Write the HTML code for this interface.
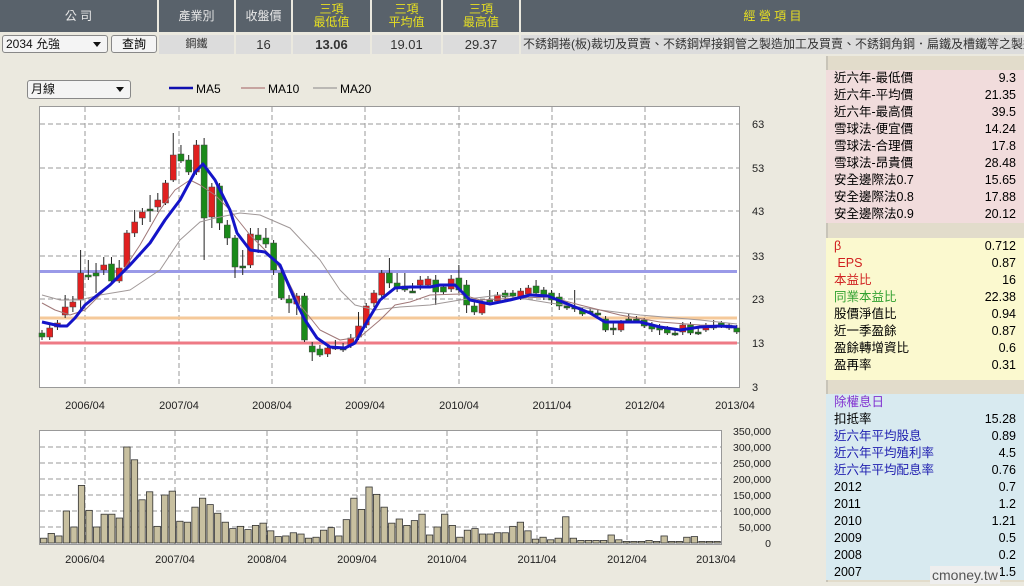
<!DOCTYPE html>
<html><head><meta charset="utf-8">
<style>
*{margin:0;padding:0;box-sizing:border-box}
body{width:1024px;height:586px;overflow:hidden;background:#ebe9df;font-family:"Liberation Sans","Noto Sans CJK TC",sans-serif;position:relative}
.h{position:absolute;top:0;height:32px;background:#59626b;color:#e8e8e8;font-size:12px;text-align:center;display:flex;align-items:center;justify-content:center;line-height:13px}
.h.y{color:#e8e020}
.r{position:absolute;top:35px;height:19px;background:#dcdcdc;font-size:13px;text-align:center;line-height:19px;color:#333}
.sel{position:absolute;background:#f4f4f4;border:1px solid #888;border-radius:3px;font-size:12px;line-height:16px;padding-left:3px;color:#111}
.sel:after{content:"";position:absolute;right:6px;top:6px;border-left:4px solid transparent;border-right:4px solid transparent;border-top:5px solid #111}
.pan{position:absolute;left:826px;width:198px;font-size:12.5px}
.pan div{height:17px;line-height:17px;display:flex;justify-content:space-between;padding:0 8px 0 8px}
</style></head><body>
<div style="position:absolute;left:0;top:0;width:90px;height:3px;background:#111"></div>
<div class="h" style="left:0;width:157px">公 司</div>
<div class="h" style="left:159px;width:75px">產業別</div>
<div class="h" style="left:236px;width:55px">收盤價</div>
<div class="h y" style="left:293px;width:77px">三項<br>最低值</div>
<div class="h y" style="left:372px;width:69px">三項<br>平均值</div>
<div class="h y" style="left:443px;width:76px">三項<br>最高值</div>
<div class="h y" style="left:521px;width:503px">經 營 項 目</div>
<div class="sel" style="left:2px;top:35px;width:106px;height:18px">2034 允強</div>
<div style="position:absolute;left:111px;top:35px;width:46px;height:18px;background:#f4f4f4;border:1px solid #888;border-radius:3px;font-size:12px;line-height:16px;text-align:center">查詢</div>
<div class="r" style="left:159px;width:75px;font-size:11px">鋼鐵</div>
<div class="r" style="left:236px;width:55px">16</div>
<div class="r" style="left:293px;width:77px;font-weight:bold">13.06</div>
<div class="r" style="left:372px;width:69px">19.01</div>
<div class="r" style="left:443px;width:76px">29.37</div>
<div class="r" style="left:521px;width:503px;text-align:left;padding-left:2px;font-size:12px;white-space:nowrap;overflow:hidden">不銹鋼捲(板)裁切及買賣、不銹鋼焊接鋼管之製造加工及買賣、不銹鋼角鋼．扁鐵及槽鐵等之製造加</div>
<div class="sel" style="left:27px;top:80px;width:104px;height:19px;line-height:17px">月線</div>
<svg style="position:absolute;left:0;top:0" width="826" height="586" id="sv">
<g font-size="12" font-family="Liberation Sans,sans-serif">
<line x1="169" y1="88" x2="193" y2="88" stroke="#1010b0" stroke-width="2.5"/><text x="196" y="93">MA5</text>
<line x1="241" y1="88" x2="265" y2="88" stroke="#a06060"/><text x="268" y="93">MA10</text>
<line x1="313" y1="88" x2="337" y2="88" stroke="#888"/><text x="340" y="93">MA20</text>
</g>
</svg>
<div class="pan" style="top:56px;height:526px;background:#e2dccb;border-left:2px solid #c8c4b8"></div>
<div class="pan" style="top:70px;background:#f1dcdc;padding:0">
<div><span>近六年-最低價</span><span>9.3</span></div>
<div><span>近六年-平均價</span><span>21.35</span></div>
<div><span>近六年-最高價</span><span>39.5</span></div>
<div><span>雪球法-便宜價</span><span>14.24</span></div>
<div><span>雪球法-合理價</span><span>17.8</span></div>
<div><span>雪球法-昂貴價</span><span>28.48</span></div>
<div><span>安全邊際法0.7</span><span>15.65</span></div>
<div><span>安全邊際法0.8</span><span>17.88</span></div>
<div><span>安全邊際法0.9</span><span>20.12</span></div>
</div>
<div class="pan" style="top:238px;background:#fbf9cf;height:142px">
<div><span style="color:#d02020">β</span><span>0.712</span></div>
<div><span style="color:#d02020">&nbsp;EPS</span><span>0.87</span></div>
<div><span style="color:#d02020">本益比</span><span>16</span></div>
<div><span style="color:#30a030">同業本益比</span><span>22.38</span></div>
<div><span>股價淨值比</span><span>0.94</span></div>
<div><span>近一季盈餘</span><span>0.87</span></div>
<div><span>盈餘轉增資比</span><span>0.6</span></div>
<div><span>盈再率</span><span>0.31</span></div>
</div>
<div class="pan" style="top:394px;background:#d8eaf0;height:186px">
<div><span style="color:#8030d0">除權息日</span><span></span></div>
<div><span>扣抵率</span><span>15.28</span></div>
<div><span style="color:#2020b0">近六年平均股息</span><span>0.89</span></div>
<div><span style="color:#2020b0">近六年平均殖利率</span><span>4.5</span></div>
<div><span style="color:#2020b0">近六年平均配息率</span><span>0.76</span></div>
<div><span>2012</span><span>0.7</span></div>
<div><span>2011</span><span>1.2</span></div>
<div><span>2010</span><span>1.21</span></div>
<div><span>2009</span><span>0.5</span></div>
<div><span>2008</span><span>0.2</span></div>
<div><span>2007</span><span>1.5</span></div>
</div>
<div style="position:absolute;left:930px;top:566px;font-size:14px;color:#555;background:#eee;padding:0 2px;line-height:18px">cmoney.tw</div>
<script>
var s='';
s+='<rect x="39.5" y="106.5" width="700" height="281" fill="#fff" stroke="#999"/>';
[124,168,211,256,299,343].forEach(function(y){s+='<line x1="40" x2="739" y1="'+y+'" y2="'+y+'" stroke="#999" stroke-dasharray="5,3"/>';});
[85,179,272,365,459,552,645].forEach(function(x){s+='<line y1="107" y2="387" x1="'+x+'" x2="'+x+'" stroke="#999" stroke-dasharray="5,3"/>';});
var lab=['63','53','43','33','23','13','3'];[124,168,211,256,299,343,387].forEach(function(y,i){s+='<text x="752" y="'+(y+4)+'" font-size="11" fill="#222">'+lab[i]+'</text>';});
['2006/04','2007/04','2008/04','2009/04','2010/04','2011/04','2012/04','2013/04'].forEach(function(t,i){var x=[85,179,272,365,459,552,645,735][i];s+='<text x="'+x+'" y="409" font-size="11" text-anchor="middle" fill="#222">'+t+'</text>';});
s+='<line x1="40" x2="737" y1="271.5" y2="271.5" stroke="#9a9ae8" stroke-width="3"/>';
s+='<line x1="40" x2="737" y1="318" y2="318" stroke="#f5c99a" stroke-width="3"/>';
s+='<line x1="40" x2="737" y1="343" y2="343" stroke="#ee7a85" stroke-width="3"/>';
var C=[['g',333,337,330,340],['r',328,337,325,340],['r',323,327,320,330],['r',307,315,295,318],['r',302,307,296,312],['r',273,300,250,310],['g',275,277,260,280],['g',273,276,263,293],['r',265,270,257,275],['g',264,281,257,283],['r',268,281,260,283],['r',233,267,230,268],['r',222,233,210,237],['r',212,218,208,225],['s',209,210,195,222],['r',200,207,193,212],['r',183,203,180,205],['r',155,180,133,182],['g',154,161,145,163],['g',160,172,155,175],['r',145,172,140,175],['g',145,218,138,260],['r',187,217,183,228],['g',186,223,183,230],['g',225,238,220,245],['g',238,267,235,278],['s',266,267,250,275],['r',234,265,228,268],['g',235,240,228,253],['g',238,244,228,248],['g',243,270,240,275],['g',273,298,268,300],['g',299,303,295,313],['r',296,304,293,315],['g',296,340,293,342],['g',346,352,342,361],['g',349,355,345,357],['r',348,354,345,357],['s',347,348,340,350],['s',348,349,343,352],['r',338,345,334,348],['r',326,337,312,340],['r',306,325,303,328],['r',293,303,290,307],['r',273,295,270,298],['g',273,283,258,288],['g',283,288,273,292],['g',286,290,273,292],['s',291,292,283,293],['r',280,285,276,290],['r',279,285,276,288],['g',280,292,275,305],['g',287,292,284,295],['r',279,289,275,292],['g',278,290,265,293],['g',285,305,280,313],['g',306,312,302,315],['r',303,313,300,315],['g',300,302,290,305],['r',295,301,292,303],['g',293,297,290,300],['g',293,296,290,298],['r',291,298,288,300],['r',288,294,285,296],['g',286,293,280,295],['g',290,296,287,300],['g',293,300,290,305],['g',297,306,293,310],['s',306,307,302,310],['s',307,308,290,312],['g',310,314,308,316],['s',311,312,308,314],['s',313,314,310,316],['g',319,330,316,332],['s',328,329,323,335],['r',323,330,320,332],['s',319,320,314,322],['s',319,320,316,322],['g',320,326,318,328],['g',325,329,322,332],['g',327,330,324,335],['g',329,333,326,335],['s',333,334,330,336],['r',325,332,322,335],['g',325,333,322,335],['s',332,333,328,335],['r',326,330,323,332],['s',326,327,320,330],['g',323,326,321,328],['g',325,328,323,330],['g',328,332,325,334]];
C.forEach(function(c,i){var x=42+i*7.72;var col=c[0]=='r'?'#e02020':(c[0]=='g'?'#1a8a1a':'#1a6a1a');
s+='<line x1="'+x+'" x2="'+x+'" y1="'+c[3]+'" y2="'+c[4]+'" stroke="#222" stroke-width="1"/>';
s+='<rect x="'+(x-3)+'" y="'+c[1]+'" width="6" height="'+Math.max(2,c[2]-c[1])+'" fill="'+col+'" stroke="#444" stroke-width=".5"/>';});
function pl(p,c,w){return '<polyline fill="none" stroke="'+c+'" stroke-width="'+w+'" stroke-linejoin="round" points="'+p+'"/>';}
s+=pl('42,295 60,300 80,300 100,295 130,290 160,270 180,240 200,222 215,218 240,213 260,215 290,228 320,260 340,290 355,305 375,310 400,307 430,305 460,300 500,295 550,303 600,310 640,315 700,320 737,324','#a09898',1);
s+=pl('42,303 55,310 70,315 85,310 100,295 120,275 140,245 160,210 175,190 190,180 200,185 215,195 230,210 250,235 270,255 285,275 300,305 320,330 340,340 360,337 380,320 395,305 410,302 430,295 460,294 480,300 520,298 550,297 580,305 620,315 660,322 700,325 737,326','#a07878',1);
s+=pl('42,322 60,326 67,326 75,318 85,305 110,285 130,265 150,243 165,220 180,200 195,172 203,164 215,180 230,210 237,233 250,250 265,252 280,265 295,300 305,320 317,338 330,347 345,348 355,343 365,325 380,300 395,288 410,287 430,287 440,285 455,285 470,300 490,304 510,300 530,295 548,296 570,305 590,313 605,322 620,322 640,322 660,327 680,330 700,327 720,326 737,327','#1414c8',3);
s+='<rect x="39.5" y="430.5" width="682" height="114" fill="#fff" stroke="#999"/>';
for(var k=1;k<7;k++){var y=543-k*16;s+='<line x1="40" x2="721" y1="'+y+'" y2="'+y+'" stroke="#999" stroke-dasharray="5,3"/>';}
for(var k=0;k<8;k++){var y=543-k*16;s+='<text x="771" y="'+(y+4)+'" font-size="10.5" text-anchor="end" fill="#222">'+(k==0?'0':(k*50)+',000')+'</text>';}
[85,175,267,357,447,537,627].forEach(function(x){s+='<line y1="431" y2="544" x1="'+x+'" x2="'+x+'" stroke="#999" stroke-dasharray="5,3"/>';});
['2006/04','2007/04','2008/04','2009/04','2010/04','2011/04','2012/04','2013/04'].forEach(function(t,i){var x=[85,175,267,357,447,537,627,716][i];s+='<text x="'+x+'" y="563" font-size="11" text-anchor="middle" fill="#222">'+t+'</text>';});
var V=[15,30,22,100,50,180,102,50,90,90,78,300,260,135,160,52,150,162,68,65,112,140,120,93,65,45,52,42,55,62,38,20,22,32,28,15,18,40,48,22,73,140,105,175,152,112,62,75,55,70,90,25,50,90,55,18,40,45,28,28,32,32,52,65,38,12,18,10,15,82,15,8,8,8,8,25,10,5,5,5,8,5,22,5,5,18,20,5,5,5];
var bw=681/V.length;V.forEach(function(v,i){var h=v*16/50;s+='<rect x="'+(40+i*bw+0.5)+'" y="'+(543-h)+'" width="'+(bw-1.2)+'" height="'+h+'" fill="#c8c0a0" stroke="#333" stroke-width=".8"/>';});
document.getElementById('sv').insertAdjacentHTML('beforeend',s);
</script>
</body></html>
